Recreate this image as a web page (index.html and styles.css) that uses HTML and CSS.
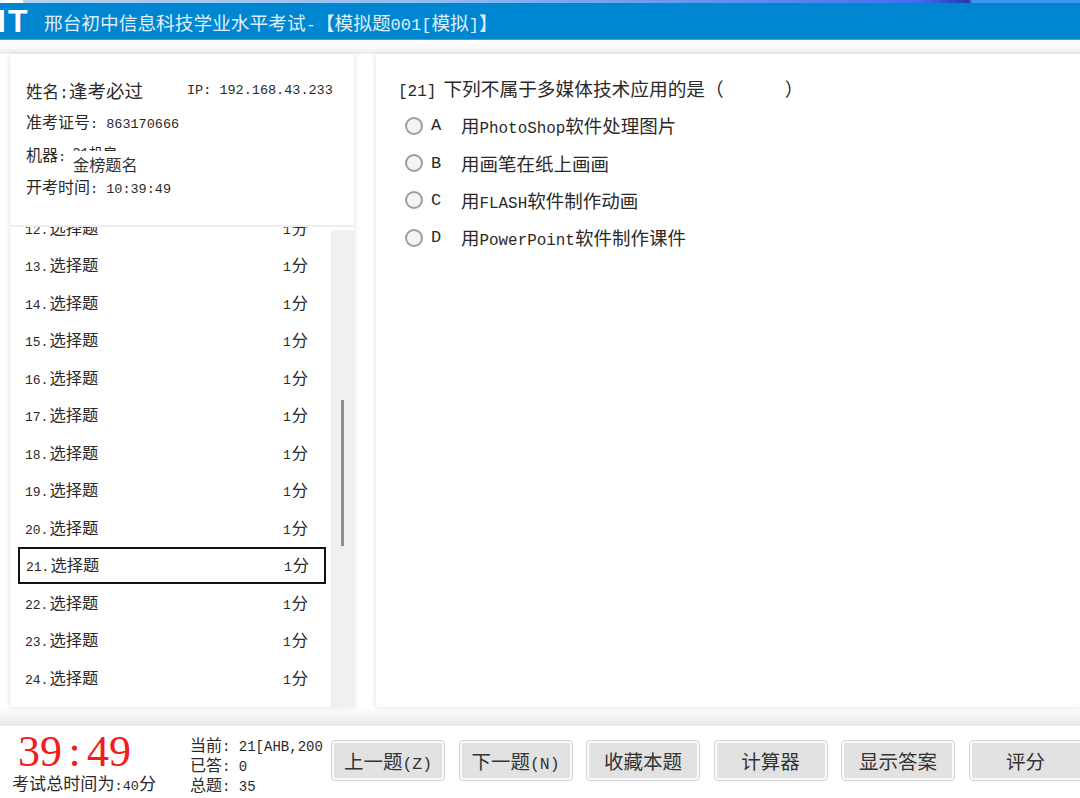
FILE: index.html
```html
<!DOCTYPE html>
<html lang="zh">
<head>
<meta charset="utf-8">
<title>考试</title>
<link rel="stylesheet" href="styles.css">
</head>
<body>
<div class="topstrip"><span class="tab"></span></div>
<header class="titlebar"><span class="logo">IT</span><span class="title">邢台初中信息科技学业水平考试<span class="en">-</span>【模拟题<span class="en">001[</span>模拟<span class="en">]</span>】</span></header>
<main class="main">
  <aside class="left">
    <section class="info">
      <div class="row-name"><span class="nm">姓名<span class="en">:</span><span class="big">逢考必过</span></span><span class="ip">IP: 192.168.43.233</span></div>
      <div class="row-info">准考证号<span class="en">: 863170666</span></div>
      <div class="row-info machine">机器<span class="en">: </span><span class="hidden">31机房</span><span class="mask">金榜题名</span></div>
      <div class="row-info">开考时间<span class="en">: 10:39:49</span></div>
    </section>
    <section class="listwrap">
      <ul class="list">
        <li class="item"><span><span class="en">12.</span>选择题</span><span><span class="en">1</span>分</span></li>
        <li class="item"><span><span class="en">13.</span>选择题</span><span><span class="en">1</span>分</span></li>
        <li class="item"><span><span class="en">14.</span>选择题</span><span><span class="en">1</span>分</span></li>
        <li class="item"><span><span class="en">15.</span>选择题</span><span><span class="en">1</span>分</span></li>
        <li class="item"><span><span class="en">16.</span>选择题</span><span><span class="en">1</span>分</span></li>
        <li class="item"><span><span class="en">17.</span>选择题</span><span><span class="en">1</span>分</span></li>
        <li class="item"><span><span class="en">18.</span>选择题</span><span><span class="en">1</span>分</span></li>
        <li class="item"><span><span class="en">19.</span>选择题</span><span><span class="en">1</span>分</span></li>
        <li class="item"><span><span class="en">20.</span>选择题</span><span><span class="en">1</span>分</span></li>
        <li class="item current"><span><span class="en">21.</span>选择题</span><span><span class="en">1</span>分</span></li>
        <li class="item"><span><span class="en">22.</span>选择题</span><span><span class="en">1</span>分</span></li>
        <li class="item"><span><span class="en">23.</span>选择题</span><span><span class="en">1</span>分</span></li>
        <li class="item"><span><span class="en">24.</span>选择题</span><span><span class="en">1</span>分</span></li>
      </ul>
      <div class="scrollbar"><div class="thumb"></div></div>
    </section>
  </aside>
  <section class="question">
    <p class="stem"><span class="num">[21]</span>下列不属于多媒体技术应用的是（<span class="blank"></span>）</p>
    <label class="opt"><span class="radio"></span><span class="letter">A</span><span>用<span class="en">PhotoShop</span>软件处理图片</span></label>
    <label class="opt"><span class="radio"></span><span class="letter">B</span><span>用画笔在纸上画画</span></label>
    <label class="opt"><span class="radio"></span><span class="letter">C</span><span>用<span class="en">FLASH</span>软件制作动画</span></label>
    <label class="opt"><span class="radio"></span><span class="letter">D</span><span>用<span class="en">PowerPoint</span>软件制作课件</span></label>
  </section>
</main>
<footer class="footer">
  <div class="timer">
    <div class="clock">39<span class="colon">:</span>49</div>
    <div class="total">考试总时间为<span class="en">:40</span>分</div>
  </div>
  <div class="stats">
    <div class="stat clip">当前<span class="en">: 21[AHB,200]</span></div>
    <div class="stat">已答<span class="en">: 0</span></div>
    <div class="stat">总题<span class="en">: 35</span></div>
  </div>
  <div class="buttons">
    <button class="btn">上一题<span class="en">(Z)</span></button>
    <button class="btn">下一题<span class="en">(N)</span></button>
    <button class="btn">收藏本题</button>
    <button class="btn">计算器</button>
    <button class="btn">显示答案</button>
    <button class="btn">评分</button>
  </div>
</footer>
</body>
</html>
```
FILE: styles.css
```css
* { box-sizing: border-box; }
html, body { margin: 0; padding: 0; }
body {
  width: 1080px;
  height: 798px;
  overflow: hidden;
  background: #fff;
  color: #2a2a2a;
  font-family: "Liberation Mono", "Noto Sans CJK SC", monospace;
  display: flex;
  flex-direction: column;
}
.topstrip {
  height: 3px;
  flex: none;
  display: flex;
  background: linear-gradient(90deg, #b4d3f0 0%, #8fbdf0 40%, #4a80f0 78%, #3f6ff0 85%, #2236b0 89.7%, #3c95ee 90%, #3c95ee 100%);
}
.tab { width: 23px; background: #fff; }
.titlebar {
  height: 37px;
  flex: none;
  background: #0085d0;
  border-bottom: 1px solid #3aa0e0;
  display: flex;
  align-items: center;
  color: #dff0fb;
  overflow: hidden;
}
.logo {
  width: 44px;
  flex: none;
  margin-left: -3px;
  margin-right: 3px;
  font: 700 32px/37px "Liberation Sans", sans-serif;
  color: #fff;
  letter-spacing: 2px;
}
.title { font-size: 18.7px; white-space: nowrap; padding-top: 1px; }
.title .en { font-size: 17px; }
.main {
  height: 686px;
  flex: none;
  padding: 14px 0 19px 10px;
  display: flex;
  gap: 22px;
  background:
    linear-gradient(180deg, #fff 6px, #e9e9e9 14px) 0 0 / 100% 14px no-repeat,
    linear-gradient(180deg, #fff, #e8e8e8) 0 100% / 100% 18px no-repeat,
    #fff;
}
.left {
  width: 344px;
  display: flex;
  flex-direction: column;
  background: #fff;
  box-shadow: 0 0 5px #ddd;
}
.info {
  height: 173px;
  flex: none;
  padding: 23px 0 0 16px;
  border-bottom: 2px solid #eee;
  font-size: 16px;
}
.row-name { display: flex; align-items: center; height: 26px; margin-bottom: 4px; }
.nm { font-size: 16.5px; width: 161px; flex: none; white-space: nowrap; }
.big { font-size: 18.5px; }
.ip { font-size: 13.5px; }
.row-info { height: 32.5px; line-height: 34px; white-space: nowrap; }
.row-info .en { font-size: 13.5px; }
.machine { position: relative; }
.hidden { font-size: 14px; position: relative; top: -3px; left: -2px; }
.mask {
  position: absolute;
  left: 47px;
  top: 11px;
  width: 70px;
  height: 29px;
  line-height: 32px;
  background: #fff;
  font-size: 16.2px;
  color: #333;
}
.listwrap {
  flex: 1;
  position: relative;
  overflow: hidden;
  min-height: 0;
}
.list {
  list-style: none;
  margin: -18px 0 0 0;
  padding: 0 0 0 8px;
  width: 316px;
}
.item {
  height: 37.5px;
  display: flex;
  align-items: center;
  justify-content: space-between;
  padding: 0 18px 2px 7px;
  font-size: 16.3px;
  white-space: nowrap;
}
.item .en { font-size: 13px; margin-right: 1px; }
.current {
  outline: 2px solid #111;
  outline-offset: -2px;
  padding-left: 8px;
  padding-right: 17px;
}
.scrollbar {
  position: absolute;
  top: 3px;
  right: 0;
  bottom: 0;
  width: 23px;
  background: #f0f0f0;
}
.thumb {
  width: 3px;
  height: 146px;
  margin: 170px 0 0 10px;
  background: #8f8f8f;
}
.question {
  flex: 1;
  background: #fff;
  box-shadow: 0 0 5px #ddd;
  padding: 22px 0 0 22px;
  font-size: 18.7px;
}
.stem { margin: 0 0 1px; height: 30px; line-height: 30px; white-space: nowrap; }
.num { font-size: 16px; margin-right: 7px; }
.blank { display: inline-block; width: 61px; }
.opt {
  display: flex;
  align-items: center;
  height: 37.4px;
  padding-left: 7px;
  white-space: nowrap;
  font-size: 18.5px;
}
.opt .en { font-size: 15.9px; }
.radio {
  width: 18px;
  height: 18px;
  border-radius: 50%;
  border: 2px solid #9d9d9d;
  background: #f4f4f4;
  flex: none;
  margin-right: 8px;
}
.letter { width: 30px; flex: none; font-size: 17px; }
.footer {
  flex: 1;
  background: #fff;
  display: flex;
  align-items: flex-start;
  min-height: 0;
}
.timer { width: 190px; flex: none; padding: 7px 0 0 12px; }
.clock {
  font: 44px/38px "Liberation Serif", serif;
  color: #f31b1b;
  padding-left: 6px;
  white-space: nowrap;
}
.colon { display: inline-block; width: 25px; text-align: center; }
.total { font-size: 17.1px; line-height: 24px; margin-top: 3px; white-space: nowrap; }
.total .en { font-size: 13.5px; }
.stats { width: 133px; flex: none; padding-top: 11px; font-size: 16px; }
.stat { height: 20px; line-height: 20px; white-space: nowrap; }
.stat .en { font-size: 14px; }
.clip { overflow: hidden; }
.buttons { display: flex; gap: 15.5px; padding-top: 15px; margin-left: 9px; flex: none; }
.btn {
  width: 112px;
  height: 39px;
  flex: none;
  padding: 0;
  background: #e2e2e2;
  border: 2px solid #fafafa;
  outline: 1px solid #d4d4d4;
  border-radius: 3px;
  color: #333;
  font: 19.5px "Liberation Mono", "Noto Sans CJK SC", monospace;
}
.btn .en { font-size: 16.5px; }
```
